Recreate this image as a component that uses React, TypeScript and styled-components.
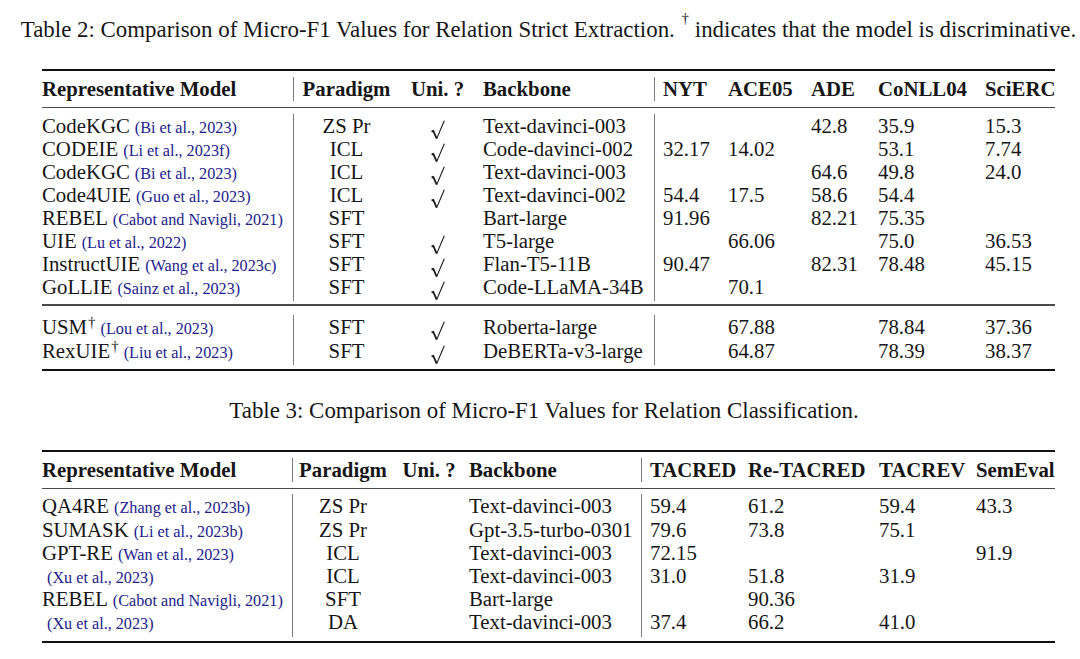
import React from 'react';
import styled, { createGlobalStyle } from 'styled-components';

const GlobalStyle = createGlobalStyle`
  html, body {
    margin: 0;
    padding: 0;
    background: #ffffff;
  }
  body {
    font-family: "Liberation Serif", "Times New Roman", serif;
    color: #161616;
  }
`;

const Page = styled.div`
  width: 1013px;
  padding: 18px 0 0 42px;
`;

// captions are centred on the table and may run past its edges
const Caption = styled.div<{ $top: number; $shift?: number }>`
  display: flex;
  justify-content: center;
  white-space: nowrap;
  margin-top: ${p => p.$top}px;
  padding-right: ${p => p.$shift ?? 0}px;
  font-size: 22.9px;
  line-height: 24px;
  height: 24px;
`;

const Dagger = styled.sup`
  font-size: 15px;
  line-height: 0;
  vertical-align: 7px;
  margin-left: 1px;
`;

const Table = styled.div<{ $top: number }>`
  margin-top: ${p => p.$top}px;
  font-size: 20.8px;
`;

const Rule = styled.div<{ $heavy?: boolean }>`
  height: ${p => (p.$heavy ? 2 : 1.3)}px;
  background: ${p => (p.$heavy ? '#111111' : '#4a4a4a')};
`;

const Group = styled.div<{ $pt: number; $pb: number }>`
  padding: ${p => p.$pt}px 0 ${p => p.$pb}px;
`;

const Row = styled.div<{ $cols: string; $h: number; $bold?: boolean }>`
  display: grid;
  grid-template-columns: ${p => p.$cols};
  height: ${p => p.$h}px;
  line-height: ${p => p.$h}px;
  font-weight: ${p => (p.$bold ? 700 : 400)};
`;

const Cell = styled.div<{ $center?: boolean; $bar?: boolean; $pl?: number }>`
  text-align: ${p => (p.$center ? 'center' : 'left')};
  padding-left: ${p => p.$pl ?? 0}px;
  border-left: ${p => (p.$bar ? '1.4px solid #7a7a7a' : 'none')};
  white-space: nowrap;
`;

const Cite = styled.span`
  margin-left: 5px;
  font-size: 16.2px;
  color: #22228e;
`;

const CheckSvg = styled.svg`
  display: inline-block;
  width: 14px;
  height: 20px;
  vertical-align: -7px;
`;

const Check = () => (
  <CheckSvg viewBox="0 0 14 20">
    <path d="M0.6 11.6 L2.3 10.8 L5.7 18.6" fill="none" stroke="#1a1a1a" strokeWidth="1.8" strokeLinejoin="round" />
    <path d="M5.7 18.6 L13.3 0.8" fill="none" stroke="#1a1a1a" strokeWidth="1.1" />
  </CheckSvg>
);

type Model = { name: string; dagger?: boolean; cite: string };

type Col = { center?: boolean; bar?: boolean; pl?: number };

const ModelCell = ({ m }: { m: Model }) => (
  <Cell>
    {m.name}
    {m.dagger && <Dagger>†</Dagger>}
    <Cite>({m.cite})</Cite>
  </Cell>
);

const t2Cols = '251px 106px 77px 178px 74px 83px 67px 107px 70px';
const t2Layout: Col[] = [
  {},
  { center: true, bar: true },
  { center: true },
  { pl: 7 },
  { bar: true, pl: 8 },
  {},
  {},
  {},
  {},
];

const t3Cols = '250px 101px 72px 176px 107px 131px 97px 79px';
const t3Layout: Col[] = [
  {},
  { center: true, bar: true },
  { center: true },
  { pl: 4 },
  { bar: true, pl: 8 },
  {},
  {},
  {},
];

type DataRow = { m: Model; vals: string[] };

const Y = 'check';

const t2Head = ['Representative Model', 'Paradigm', 'Uni. ?', 'Backbone', 'NYT', 'ACE05', 'ADE', 'CoNLL04', 'SciERC'];

const t2Main: DataRow[] = [
  { m: { name: 'CodeKGC', cite: 'Bi et al., 2023' }, vals: ['ZS Pr', Y, 'Text-davinci-003', '', '', '42.8', '35.9', '15.3'] },
  { m: { name: 'CODEIE', cite: 'Li et al., 2023f' }, vals: ['ICL', Y, 'Code-davinci-002', '32.17', '14.02', '', '53.1', '7.74'] },
  { m: { name: 'CodeKGC', cite: 'Bi et al., 2023' }, vals: ['ICL', Y, 'Text-davinci-003', '', '', '64.6', '49.8', '24.0'] },
  { m: { name: 'Code4UIE', cite: 'Guo et al., 2023' }, vals: ['ICL', Y, 'Text-davinci-002', '54.4', '17.5', '58.6', '54.4', ''] },
  { m: { name: 'REBEL', cite: 'Cabot and Navigli, 2021' }, vals: ['SFT', '', 'Bart-large', '91.96', '', '82.21', '75.35', ''] },
  { m: { name: 'UIE', cite: 'Lu et al., 2022' }, vals: ['SFT', Y, 'T5-large', '', '66.06', '', '75.0', '36.53'] },
  { m: { name: 'InstructUIE', cite: 'Wang et al., 2023c' }, vals: ['SFT', Y, 'Flan-T5-11B', '90.47', '', '82.31', '78.48', '45.15'] },
  { m: { name: 'GoLLIE', cite: 'Sainz et al., 2023' }, vals: ['SFT', Y, 'Code-LLaMA-34B', '', '70.1', '', '', ''] },
];

const t2Disc: DataRow[] = [
  { m: { name: 'USM', dagger: true, cite: 'Lou et al., 2023' }, vals: ['SFT', Y, 'Roberta-large', '', '67.88', '', '78.84', '37.36'] },
  { m: { name: 'RexUIE', dagger: true, cite: 'Liu et al., 2023' }, vals: ['SFT', Y, 'DeBERTa-v3-large', '', '64.87', '', '78.39', '38.37'] },
];

const t3Head = ['Representative Model', 'Paradigm', 'Uni. ?', 'Backbone', 'TACRED', 'Re-TACRED', 'TACREV', 'SemEval'];

const t3Rows: DataRow[] = [
  { m: { name: 'QA4RE', cite: 'Zhang et al., 2023b' }, vals: ['ZS Pr', '', 'Text-davinci-003', '59.4', '61.2', '59.4', '43.3'] },
  { m: { name: 'SUMASK', cite: 'Li et al., 2023b' }, vals: ['ZS Pr', '', 'Gpt-3.5-turbo-0301', '79.6', '73.8', '75.1', ''] },
  { m: { name: 'GPT-RE', cite: 'Wan et al., 2023' }, vals: ['ICL', '', 'Text-davinci-003', '72.15', '', '', '91.9'] },
  { m: { name: '', cite: 'Xu et al., 2023' }, vals: ['ICL', '', 'Text-davinci-003', '31.0', '51.8', '31.9', ''] },
  { m: { name: 'REBEL', cite: 'Cabot and Navigli, 2021' }, vals: ['SFT', '', 'Bart-large', '', '90.36', '', ''] },
  { m: { name: '', cite: 'Xu et al., 2023' }, vals: ['DA', '', 'Text-davinci-003', '37.4', '66.2', '41.0', ''] },
];

const HeadRow = ({ cols, layout, labels }: { cols: string; layout: Col[]; labels: string[] }) => (
  <Row $cols={cols} $h={24} $bold>
    {labels.map((l, i) => (
      <Cell key={i} $center={layout[i].center} $bar={layout[i].bar} $pl={layout[i].pl}>
        {l}
      </Cell>
    ))}
  </Row>
);

const BodyRow = ({ cols, layout, row, h }: { cols: string; layout: Col[]; row: DataRow; h: number }) => (
  <Row $cols={cols} $h={h}>
    <ModelCell m={row.m} />
    {row.vals.map((v, i) => {
      const c = layout[i + 1];
      return (
        <Cell key={i} $center={c.center} $bar={c.bar} $pl={c.pl}>
          {v === Y ? <Check /> : v}
        </Cell>
      );
    })}
  </Row>
);

export default function App() {
  return (
    <Page>
      <GlobalStyle />
      <Caption $top={0}>
        Table 2: Comparison of Micro-F1 Values for Relation Strict Extraction.&nbsp;<Dagger>†</Dagger>&nbsp;indicates that the model is discriminative.
      </Caption>

      <Table $top={27}>
        <Rule $heavy />
        <Group $pt={6} $pb={6}>
          <HeadRow cols={t2Cols} layout={t2Layout} labels={t2Head} />
        </Group>
        <Rule />
        <Group $pt={5.5} $pb={6.5}>
          {t2Main.map((r, i) => (
            <BodyRow key={i} cols={t2Cols} layout={t2Layout} row={r} h={23} />
          ))}
        </Group>
        <Rule />
        <Group $pt={9} $pb={6}>
          {t2Disc.map((r, i) => (
            <BodyRow key={i} cols={t2Cols} layout={t2Layout} row={r} h={24} />
          ))}
        </Group>
        <Rule $heavy />
      </Table>

      <Caption $top={28} $shift={9}>
        Table 3: Comparison of Micro-F1 Values for Relation Classification.
      </Caption>

      <Table $top={27}>
        <Rule $heavy />
        <Group $pt={6} $pb={6}>
          <HeadRow cols={t3Cols} layout={t3Layout} labels={t3Head} />
        </Group>
        <Rule />
        <Group $pt={5.5} $pb={7.5}>
          {t3Rows.map((r, i) => (
            <BodyRow key={i} cols={t3Cols} layout={t3Layout} row={r} h={23.2} />
          ))}
        </Group>
        <Rule $heavy />
      </Table>
    </Page>
  );
}
